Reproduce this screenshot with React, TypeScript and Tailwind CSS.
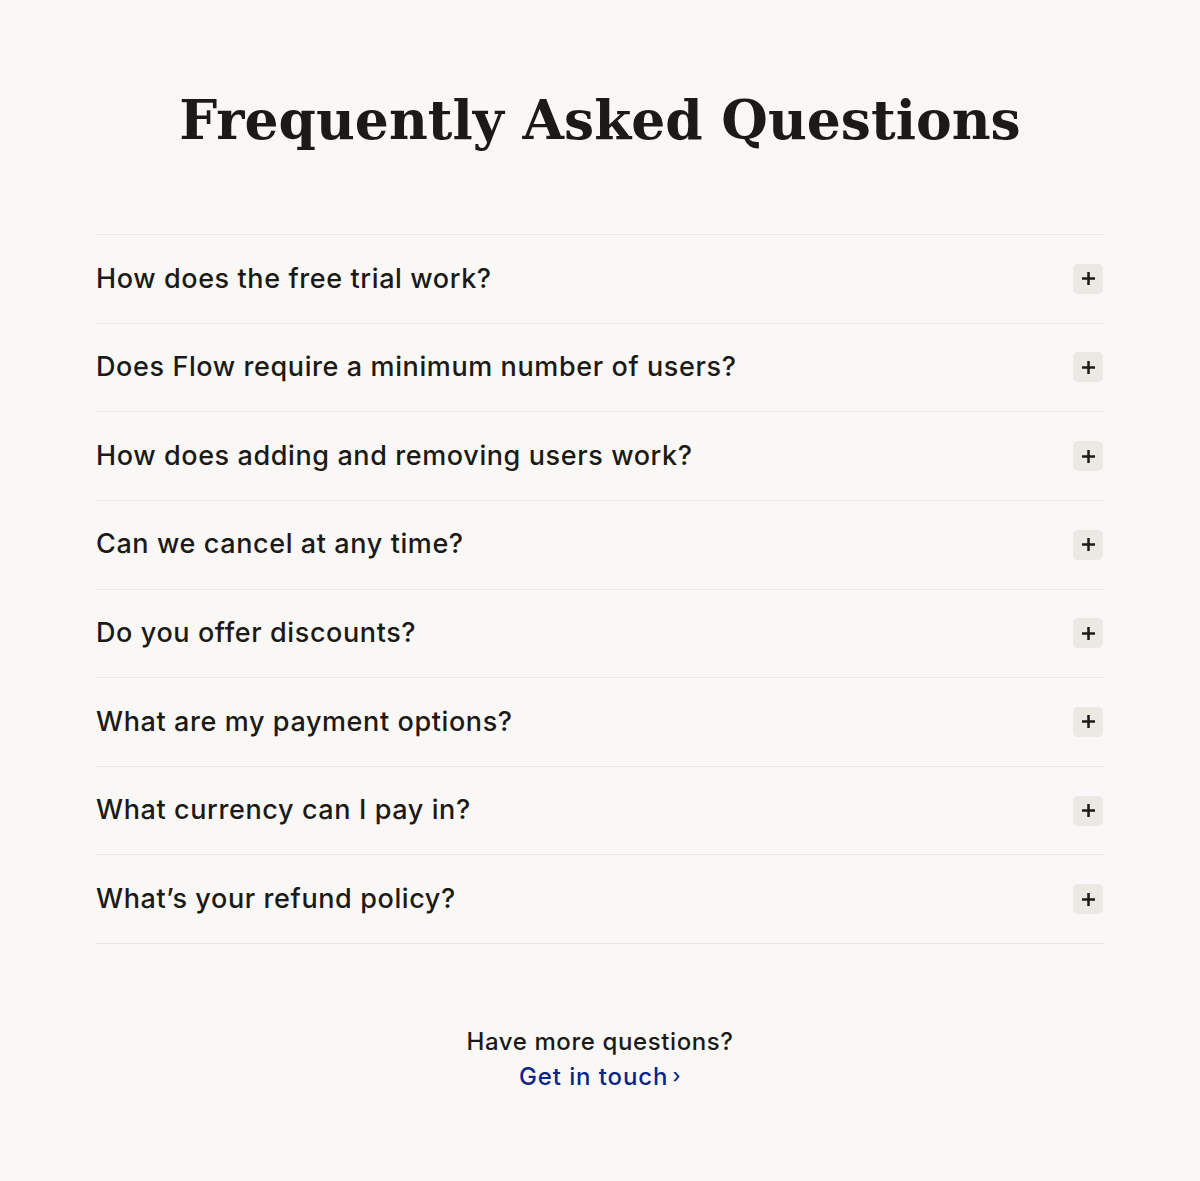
import { useState } from 'react';

const questions = [
  'How does the free trial work?',
  'Does Flow require a minimum number of users?',
  'How does adding and removing users work?',
  'Can we cancel at any time?',
  'Do you offer discounts?',
  'What are my payment options?',
  'What currency can I pay in?',
  'What\u2019s your refund policy?',
];

function PlusIcon() {
  return (
    <svg width="15" height="15" viewBox="0 0 15 15" fill="none">
      <path d="M7.5 1v13M1 7.5h13" stroke="#1c1a17" strokeWidth="2.5" />
    </svg>
  );
}

export default function App() {
  const [open, setOpen] = useState<number | null>(null);

  return (
    <div className="min-h-[1181px] bg-[#f9f8f6] font-['Inter','Lato',sans-serif] text-[#1c1a17]">
      <div className="mx-auto w-[1008px] pt-[89px]">
        <h1 className="text-center font-['DejaVu_Serif',serif] text-[53.5px] font-bold leading-[64px]">
          Frequently Asked Questions
        </h1>

        <div className="mt-[81px] border-t border-[#e9e7e2]">
          {questions.map((q, i) => (
            <div key={q} className="border-b border-[#e9e7e2]">
              <button
                onClick={() => setOpen(open === i ? null : i)}
                className="flex h-[87.625px] w-full items-center justify-between text-left"
              >
                <span className="text-[27px] font-medium tracking-[0.6px]">{q}</span>
                <span className="mr-[1px] flex h-[30px] w-[30px] items-center justify-center rounded-[5px] bg-[#ebe9e4]">
                  <PlusIcon />
                </span>
              </button>
            </div>
          ))}
        </div>

        <div className="mt-[80px] text-center text-[24px] font-medium leading-[35px] tracking-[0.6px]">
          <p>Have more questions?</p>
          <a href="#" className="inline-flex items-center gap-[4px] text-[#0a2589]">
            <span className="tracking-[0.9px]">Get in touch</span>
            <span className="text-[20px]">&rsaquo;</span>
          </a>
        </div>
      </div>
    </div>
  );
}
